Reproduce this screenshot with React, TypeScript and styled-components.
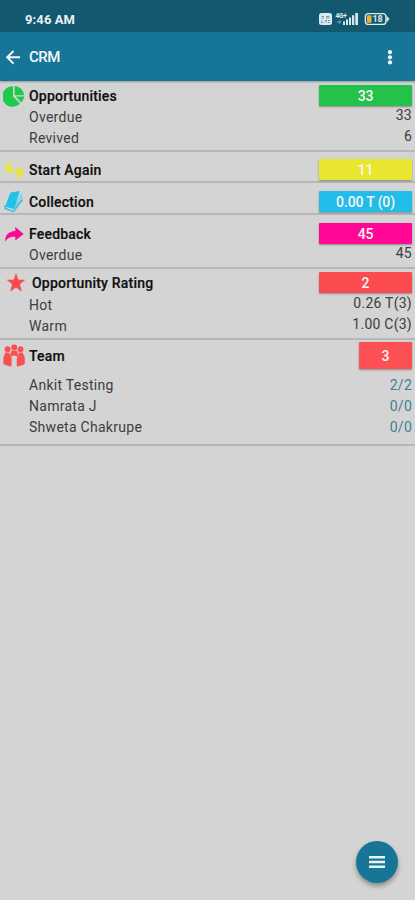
import React from 'react';
import styled, { createGlobalStyle } from 'styled-components';

const GlobalStyle = createGlobalStyle`
  * { box-sizing: border-box; }
  body { margin: 0; background: #d4d4d4; font-family: Roboto, sans-serif; }
`;

const Screen = styled.div`
  display: flex;
  flex-direction: column;
  height: 900px;
  width: 100%;
  overflow: hidden;
  background: #d4d4d4;
  color: #111;
`;

const StatusBar = styled.div`
  flex: none;
  height: 32px;
  padding: 8px 24px 0 25px;
  display: flex;
  justify-content: space-between;
  background: #12586f;
  color: #e8f1f4;
  font-size: 13px;
  line-height: 24px;
  font-weight: 700;
  letter-spacing: 0.1px;
`;

const StatusIcons = styled.svg`
  width: 74px;
  height: 16px;
  margin-top: 3px;
  letter-spacing: -0.2px;
`;

const AppBar = styled.header`
  flex: none;
  height: 49px;
  padding: 0 16px 0 3px;
  display: flex;
  align-items: center;
  background: #177697;
  color: #f3f9fb;
  box-shadow: 0 1px 2px rgba(0, 0, 0, 0.3);
  z-index: 1;
`;

const AppTitle = styled.h1`
  flex: 1;
  margin: 0 0 0 6px;
  font-size: 15px;
  font-weight: 500;
  letter-spacing: -0.5px;
`;

const Section = styled.section<{ $height: number; $top: number }>`
  flex: none;
  height: ${(p) => p.$height}px;
  padding: ${(p) => p.$top}px 3px 0 3px;
  border-bottom: 2px solid #b7b7b7;
`;

const SectionHead = styled.div<{ $height: number }>`
  display: flex;
  align-items: center;
  height: ${(p) => p.$height}px;
`;

const IconBox = styled.div`
  flex: none;
  width: 26px;
  height: 24px;
  svg { display: block; }
`;

const SectionTitle = styled.h2<{ $indent: number }>`
  flex: 1;
  margin: 0 0 0 ${(p) => p.$indent}px;
  font-size: 14px;
  line-height: 20px;
  font-weight: 500;
  letter-spacing: 0.2px;
  -webkit-text-stroke: 0.2px #111;
`;

const Badge = styled.div<{ $color: string; $width: number }>`
  width: ${(p) => p.$width}px;
  height: 100%;
  display: flex;
  align-items: center;
  justify-content: center;
  border-radius: 1px;
  background: ${(p) => p.$color};
  color: #f6f6f6;
  font-size: 14px;
  font-weight: 500;
  letter-spacing: -0.15px;
  box-shadow: 0 1px 2px rgba(0, 0, 0, 0.35);
`;

const Rows = styled.div<{ $gap: number }>`
  padding: ${(p) => p.$gap}px 0 0 26px;
`;

const Row = styled.div`
  display: flex;
  justify-content: space-between;
  height: 21px;
  font-size: 14px;
  line-height: 21px;
  color: #3d3d3d;
`;

const RowLabel = styled.span`
  letter-spacing: 0.28px;
`;

const RowValue = styled.span<{ $link: boolean }>`
  line-height: ${(p) => (p.$link ? 21 : 17)}px;
  letter-spacing: 0.25px;
  color: ${(p) => (p.$link ? '#3c8296' : '#3d3d3d')};
`;

const MenuButton = styled.button`
  position: fixed;
  right: 17px;
  bottom: 17px;
  width: 42px;
  height: 42px;
  padding: 0;
  border: 0;
  border-radius: 50%;
  display: grid;
  place-items: center;
  background: #177697;
  box-shadow: 0 3px 5px rgba(0, 0, 0, 0.35);
`;

const PieIcon = () => (
  <svg width="22" height="24" viewBox="0 0 22 24" fill="#1fc94b">
    <path d="M10 2.2V12.4L17 19.6A10.3 10.3 0 1 1 10 2.2Z" />
    <path d="M11.6 1.9A10 10 0 0 1 21 11.2H11.6Z" />
    <path d="M12.7 12.6H21.3A10 10 0 0 1 18.2 18.4Z" />
  </svg>
);

const BoltsIcon = () => (
  <svg width="22" height="24" viewBox="0 0 22 24" fill="#e6e82c">
    <path d="M9.2 2C5.6 3.4 3.8 6.4 3.4 10L1 12.2 5.2 13.2 7.6 17 8.4 14.2 10.6 12.4 8.8 9.8 7 9.6C7 6.8 7.7 4.3 9.2 2Z" />
    <path d="M14.2 8.8L15.2 11 20 11.4C21 15.6 18.6 19.6 13.4 21.8C15 19.8 15.8 18 15.8 16.2L13 15.6 11.4 12.4 12.8 11.4Z" />
  </svg>
);

const BookIcon = () => (
  <svg width="22" height="24" viewBox="0 0 22 24">
    <path d="M7.5 2.5L16.5 1.2 19.8 3 20.5 9 13.7 21.5 10.4 22.4 2 18.4 2.2 15Z" fill="#b9dce7" />
    <path d="M7.5 2.5L16.8 1 11.2 19.2 2 16.5Z" fill="#24c0ea" />
    <path d="M2 15.5V18.2L10.4 21.8 19.6 9.5" fill="none" stroke="#35b9df" strokeWidth="1.3" />
    <path d="M11.8 18L18.7 3.6M13.5 16.8L19.3 6" fill="none" stroke="#51b9d8" strokeWidth="1" strokeDasharray="2 1" />
  </svg>
);

const ShareIcon = () => (
  <svg width="22" height="24" viewBox="0 0 22 24" fill="#ff0896">
    <path d="M12.3 5L20.8 11.9 12.3 18.5V14.8C7.3 14.4 4.5 15.8 2.1 19.7C2.1 13.2 5.6 9.3 12.3 9Z" />
  </svg>
);

const StarIcon = () => (
  <svg width="26" height="24" viewBox="0 0 26 24" fill="#fb4b50">
    <path d="M13 2L15.4 8.8H22.4L16.9 13.2 18.9 20.7 13 16.5 7.1 20.7 9.1 13.2 3.6 8.8H10.6Z" />
  </svg>
);

const TeamIcon = () => (
  <svg width="22" height="24" viewBox="0 0 22 24" fill="#fb5053">
    <circle cx="4.6" cy="5.2" r="2.9" />
    <circle cx="17.6" cy="5.2" r="2.9" />
    <circle cx="11.2" cy="3.4" r="3" />
    <path d="M8.2 6.8H14.2L15.6 13.4 13.8 12.6A3.6 3.6 0 0 0 8.4 12.6L6.8 13.4Z" />
    <path d="M2.4 8.6H6.2L7.6 12.9 8.6 14V22L5.2 21 0.4 19.4V13.5Z" />
    <path d="M19.7 8.6H16L14.8 12.9 13.8 14V22L17.2 21 21.8 19.4V13.5Z" />
    <path d="M0 17.5L8 20.2V22.8L1 20.5ZM22 17.5L14 20.2V22.8L21 20.5Z" />
  </svg>
);

type Item = { label: string; value: string };
type Group = {
  title: string;
  badge: string;
  color: string;
  Icon: React.FC;
  height: number;
  top: number;
  gap?: number;
  badgeWidth?: number;
  badgeHeight?: number;
  indent?: number;
  link?: boolean;
  items?: Item[];
};

const groups: Group[] = [
  {
    title: 'Opportunities', badge: '33', color: '#24c14b', Icon: PieIcon, height: 71, top: 4,
    items: [{ label: 'Overdue', value: '33' }, { label: 'Revived', value: '6' }],
  },
  { title: 'Start Again', badge: '11', color: '#e8e62e', Icon: BoltsIcon, height: 31, top: 7 },
  { title: 'Collection', badge: '0.00 T (0)', color: '#22bce8', Icon: BookIcon, height: 32, top: 8 },
  {
    title: 'Feedback', badge: '45', color: '#ff0896', Icon: ShareIcon, height: 54, top: 8,
    items: [{ label: 'Overdue', value: '45' }],
  },
  {
    title: 'Opportunity Rating', badge: '2', color: '#fb4b50', Icon: StarIcon, height: 71, top: 3, gap: 1, indent: 3,
    items: [{ label: 'Hot', value: '0.26 T(3)' }, { label: 'Warm', value: '1.00 C(3)' }],
  },
  {
    title: 'Team', badge: '3', color: '#fd5054', Icon: TeamIcon, height: 106, top: 2, gap: 5,
    badgeWidth: 53, badgeHeight: 27, link: true,
    items: [
      { label: 'Ankit Testing', value: '2/2' },
      { label: 'Namrata J', value: '0/0' },
      { label: 'Shweta Chakrupe', value: '0/0' },
    ],
  },
];

export default function App() {
  return (
    <>
      <GlobalStyle />
      <Screen>
        <StatusBar>
          <span>9:46 AM</span>
          <StatusIcons viewBox="0 0 74 16">
            <rect x="2" y="2" width="13" height="12" rx="2.5" fill="#dce9ed" />
            <path d="M4.5 5.5H7M9 5.5H12.5M4.5 7H7M9 7H12.5M4.5 9.5V11.5H6.5M8 9.5H10M9 9.5V11.5M11 9.5H13M11 11.5H13" stroke="#5b8b9b" strokeWidth=".8" fill="none" />
            <text x="18.5" y="6.8" fontSize="6.5" fontWeight="700" fill="#e4eef1">4G+</text>
            <path d="M20 11H24M22 9.5L24 11L22 12.5" stroke="#7da5b2" strokeWidth="1" fill="none" />
            <path d="M26 10.5H28V14H26ZM29 8.5H31V14H29ZM32 6.5H34V14H32ZM35 4.3H37.3V14H35ZM38.3 2H41V14H38.3Z" fill="#d8e6eb" />
            <rect x="48.4" y="2.6" width="20.5" height="10.8" rx="3" fill="none" stroke="#dce9ed" strokeWidth="1.4" />
            <path d="M69.5 4.5L72.5 8L69.5 11.5Z" fill="#dce9ed" />
            <rect x="50" y="4.2" width="4.5" height="7.6" rx="1" fill="#e9b13a" />
            <text x="55.5" y="11.4" fontSize="9" fontWeight="700" fill="#dce9ed">18</text>
          </StatusIcons>
        </StatusBar>
        <AppBar>
          <svg width="20" height="20" viewBox="0 0 20 20" fill="none" stroke="#f3f9fb" strokeWidth="2">
            <path d="M17 10.3H4.5M10.5 4L4.2 10.3L10.5 16.6" />
          </svg>
          <AppTitle>CRM</AppTitle>
          <svg width="18" height="20" viewBox="0 0 18 20" fill="#f3f9fb">
            <circle cx="9" cy="5.2" r="2.1" />
            <circle cx="9" cy="10.3" r="2.1" />
            <circle cx="9" cy="15.4" r="2.1" />
          </svg>
        </AppBar>
        {groups.map(({ Icon, ...g }) => (
          <Section key={g.title} $height={g.height} $top={g.top}>
            <SectionHead $height={g.badgeHeight ?? 21}>
              <IconBox><Icon /></IconBox>
              <SectionTitle $indent={g.indent ?? 0}>{g.title}</SectionTitle>
              <Badge $color={g.color} $width={g.badgeWidth ?? 93}>{g.badge}</Badge>
            </SectionHead>
            {g.items && (
              <Rows $gap={(g.gap ?? 0) + 1}>
                {g.items.map((item) => (
                  <Row key={item.label}>
                    <RowLabel>{item.label}</RowLabel>
                    <RowValue $link={!!g.link}>{item.value}</RowValue>
                  </Row>
                ))}
              </Rows>
            )}
          </Section>
        ))}
        <MenuButton aria-label="Menu">
          <svg width="18" height="14" viewBox="0 0 18 14" stroke="#e9f4f7" strokeWidth="2.4">
            <path d="M1 2.2H17M1 7H17M1 11.8H17" />
          </svg>
        </MenuButton>
      </Screen>
    </>
  );
}
